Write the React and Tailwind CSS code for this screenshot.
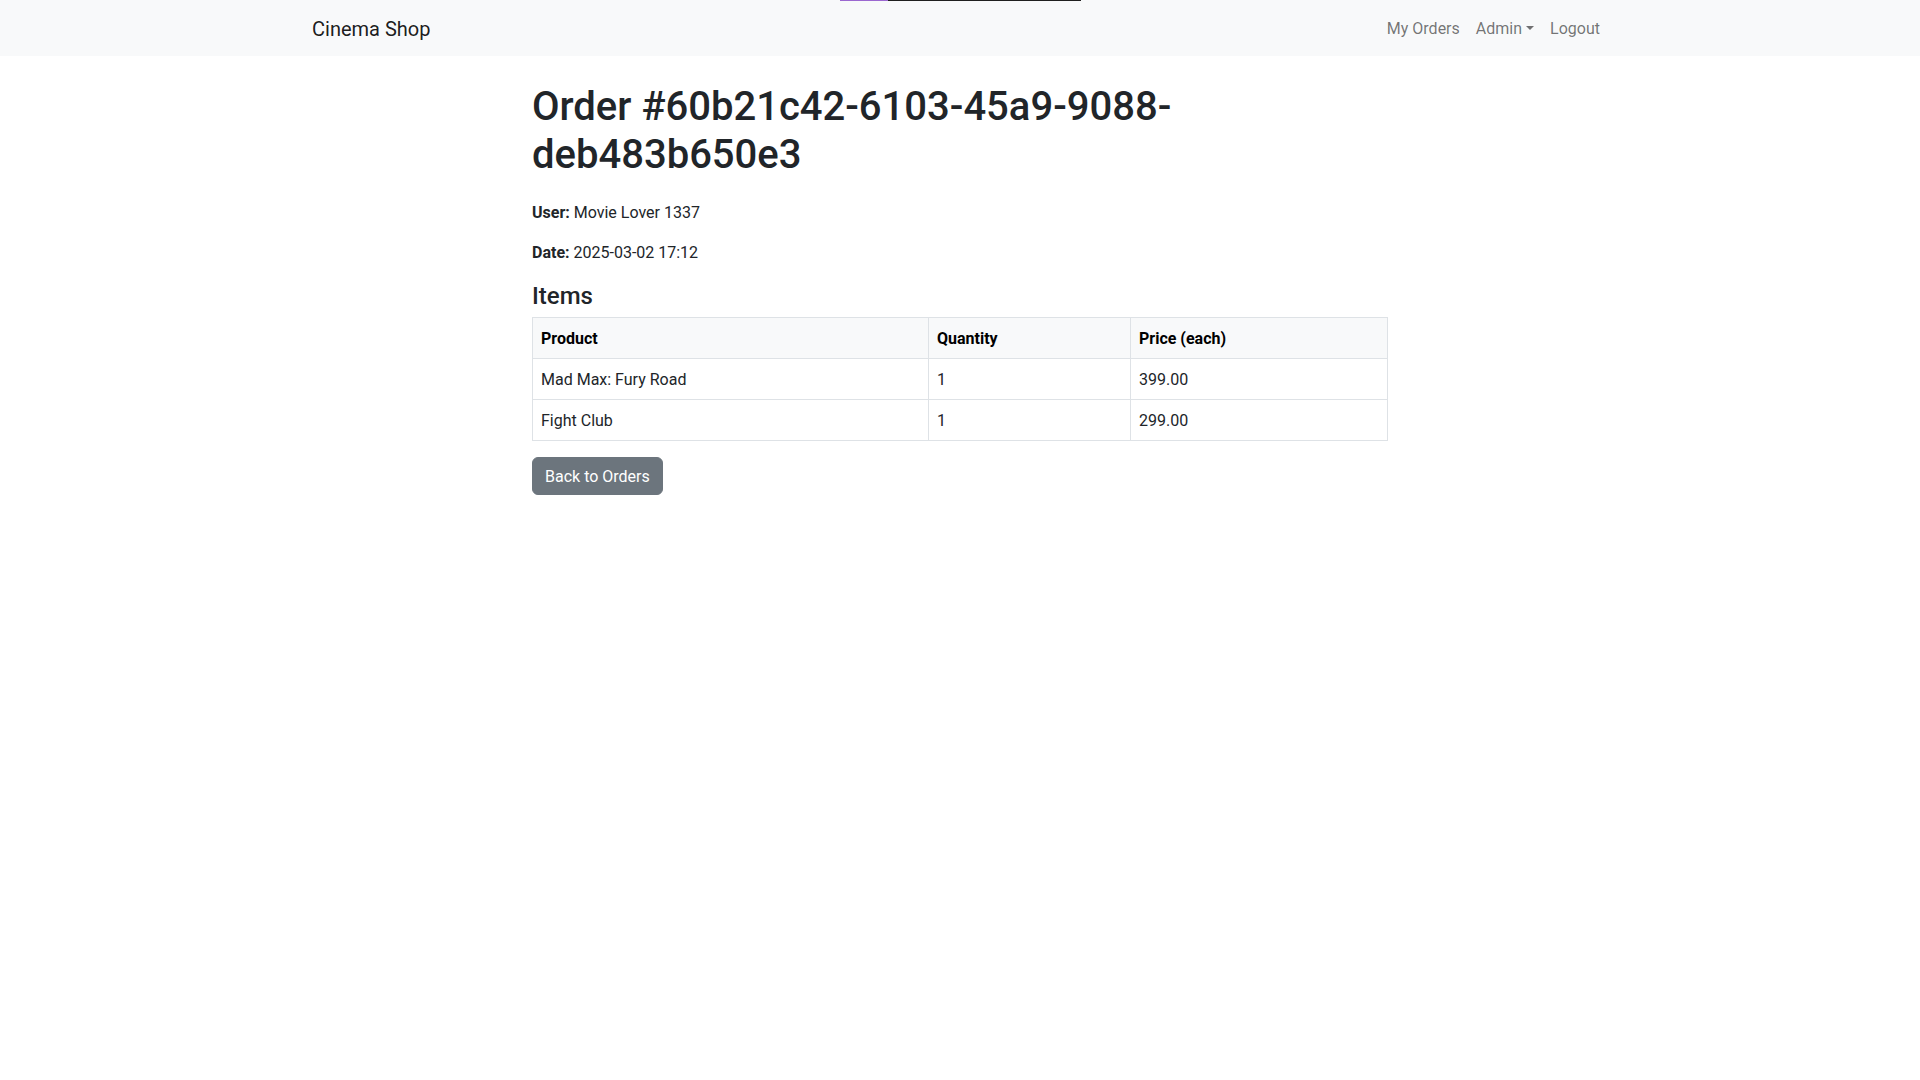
import React from 'react';

// ==========================================
// Navbar
// ==========================================
const Navbar = () => (
  <nav className="bg-[#f8f9fa] py-2">
    <div className="mx-auto flex w-[1320px] items-center justify-between px-3">
      <a href="#" className="pt-[6px] pb-[4px] text-[20px] leading-[30px] text-black/90">
        Cinema Shop
      </a>
      <ul className="flex">
        <li>
          <a href="#" className="block px-2 pt-[9px] pb-[7px] leading-6 text-black/55">My Orders</a>
        </li>
        <li>
          <a href="#" className="block px-2 pt-[9px] pb-[7px] leading-6 text-black/55">
            Admin
            <span className="ml-[0.255em] inline-block align-[0.255em] border-x-[0.3em] border-t-[0.3em] border-b-0 border-x-transparent border-t-current" />
          </a>
        </li>
        <li>
          <a href="#" className="block px-2 pt-[9px] pb-[7px] leading-6 text-black/55">Logout</a>
        </li>
      </ul>
    </div>
  </nav>
);

const items = [
  { name: 'Mad Max: Fury Road', qty: 1, price: '399.00' },
  { name: 'Fight Club', qty: 1, price: '299.00' },
];

const cell = 'border border-[#dee2e6] px-2 pt-[9px] pb-[7px] leading-6';

export default function App() {
  return (
    <div className="relative min-h-screen bg-white font-['Roboto','Liberation_Sans',sans-serif] text-base text-[#212529]">
      {/* thin loading strip at the very top */}
      <div className="absolute left-[840px] top-0 flex h-px">
        <div className="h-px w-[48px] bg-[#9b68d0]" />
        <div className="h-px w-[193px] bg-[#1f1f1f]" />
      </div>

      <Navbar />

      <main className="mx-auto mt-6 w-[1320px]">
        <div className="ml-[220px] w-[880px] px-3">
          <h1 className="mb-[21px] pt-[3px] text-[40px] font-medium leading-[48px]">
            Order #60b21c42-6103-45a9-9088-deb483b650e3
          </h1>
          <p className="mb-[15px] pt-px leading-6">
            <strong className="font-bold">User:</strong> Movie Lover 1337
          </p>
          <p className="mb-[15px] pt-px leading-6">
            <strong className="font-bold">Date:</strong> 2025-03-02 17:12
          </p>

          <h4 className="mb-[6px] pt-[2px] text-[24px] font-medium leading-[28.8px]">Items</h4>
          <table className="mb-4 w-full table-fixed border-collapse text-left">
            <thead>
              <tr className="bg-[#f8f9fa] text-black">
                <th className={`w-[396px] font-bold ${cell}`}>Product</th>
                <th className={`w-[202px] font-bold ${cell}`}>Quantity</th>
                <th className={`font-bold ${cell}`}>Price (each)</th>
              </tr>
            </thead>
            <tbody>
              {items.map((item) => (
                <tr key={item.name}>
                  <td className={cell}>{item.name}</td>
                  <td className={cell}>{item.qty}</td>
                  <td className={cell}>{item.price}</td>
                </tr>
              ))}
            </tbody>
          </table>

          <a
            href="#"
            className="inline-block rounded-[6px] border border-[#6c757d] bg-[#6c757d] px-3 pt-[7px] pb-[5px] leading-6 text-white"
          >
            Back to Orders
          </a>
        </div>
      </main>
    </div>
  );
}
